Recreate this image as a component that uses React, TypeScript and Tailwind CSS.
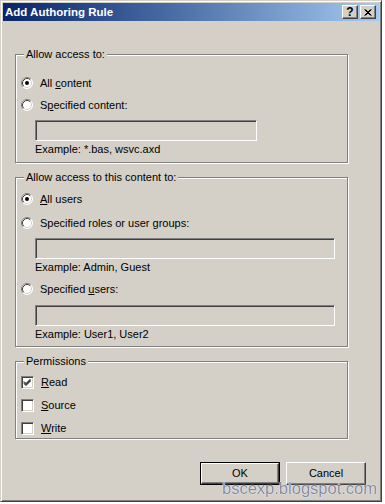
import type { ReactNode } from 'react';

const Radio = ({ checked }: { checked?: boolean }) => (
  <svg width="12" height="12" viewBox="0 0 12 12" className="shrink-0">
    <circle cx="6" cy="6" r="5.5" fill="#fff" />
    <path d="M2.11 9.89A5.5 5.5 0 0 1 9.89 2.11" fill="none" stroke="#808080" />
    <path d="M9.89 2.11A5.5 5.5 0 0 1 2.11 9.89" fill="none" stroke="#fff" />
    <path d="M2.82 9.18A4.5 4.5 0 0 1 9.18 2.82" fill="none" stroke="#404040" />
    <path d="M9.18 2.82A4.5 4.5 0 0 1 2.82 9.18" fill="none" stroke="#d4d0c8" />
    {checked && <circle cx="6" cy="6" r="2" fill="#000" />}
  </svg>
);

const Check = ({ checked }: { checked?: boolean }) => (
  <div className="w-[13px] h-[13px] shrink-0 bg-white border border-t-[#808080] border-l-[#808080] border-r-white border-b-white shadow-[inset_1px_1px_0_#404040,inset_-1px_-1px_0_#d4d0c8] flex items-center justify-center">
    {checked && (
      <svg width="9" height="9" viewBox="0 0 9 9">
        <path d="M1 3.5l2 2 4.5-4.5M1 4.5l2 2 4.5-4.5M1 5.5l2 2 4.5-4.5" fill="none" stroke="#000" strokeWidth="1" />
      </svg>
    )}
  </div>
);

const Field = ({ width }: { width: string }) => (
  <div
    className={`ml-[14px] h-[21px] bg-[#d4d0c8] border border-t-[#808080] border-l-[#808080] border-r-white border-b-white shadow-[inset_1px_1px_0_#404040] ${width}`}
  />
);

const Row = ({ children, top, control }: { children: ReactNode; top: string; control: ReactNode }) => (
  <div className={`flex items-center h-4 gap-[7px] ${top}`}>
    {control}
    <span className="leading-[13px]">{children}</span>
  </div>
);

const Group = ({ label, height, top, children }: { label: string; height: string; top: string; children: ReactNode }) => (
  <fieldset
    className={`w-[333px] border border-[#808080] shadow-[1px_1px_0_#fff,inset_1px_1px_0_#fff] ${height} ${top}`}
  >
    <legend className="ml-[8px] px-[2px] leading-[13px] bg-[#d4d0c8]">{label}</legend>
    <div className="flex flex-col pl-[5px]">{children}</div>
  </fieldset>
);

const Example = ({ text }: { text: string }) => (
  <div className="ml-[14px] mt-[2px] leading-[13px]">{text}</div>
);

const CaptionButton = ({ children }: { children: ReactNode }) => (
  <div className="w-[16px] h-[14px] bg-[#d4d0c8] border border-t-white border-l-white border-r-[#404040] border-b-[#404040] shadow-[inset_-1px_-1px_0_#808080] flex items-center justify-center">
    {children}
  </div>
);

export default function App() {
  return (
    <div className="relative w-[385px] h-[504px] bg-white font-['Liberation_Sans',Arial,sans-serif] text-[11px] text-black">
      <div className="w-[382px] h-[502px] flex flex-col bg-[#d4d0c8] p-[2px] border border-t-[#d4d0c8] border-l-[#d4d0c8] border-r-[#404040] border-b-[#404040] shadow-[inset_1px_1px_0_#fff,inset_-1px_-1px_0_#808080]">
        {/* title bar */}
        <div className="h-[18px] flex items-center justify-between bg-gradient-to-r from-[#0a246a] to-[#a6caf0] pl-[2px] pr-[3px]">
          <span className="text-white font-bold text-[11.5px] leading-[14px]">Add Authoring Rule</span>
          <div className="flex gap-[2px]">
            <CaptionButton>
              <span className="font-bold text-[12px] leading-[12px]">?</span>
            </CaptionButton>
            <CaptionButton>
              <svg width="8" height="7" viewBox="0 0 8 7">
                <path d="M0.5 0.5l6 6M1.5 0.5l6 6M6.5 0.5l-6 6M7.5 0.5l-6 6" stroke="#000" strokeWidth="1" />
              </svg>
            </CaptionButton>
          </div>
        </div>

        <div className="flex flex-col pl-[12px]">
          <Group label="Allow access to:" height="h-[115px]" top="mt-[27px]">
            <Row top="mt-[14px]" control={<Radio checked />}>
              All <span className="underline">c</span>ontent
            </Row>
            <Row top="mt-[6px]" control={<Radio />}>
              S<span className="underline">p</span>ecified content:
            </Row>
            <div className="mt-[7px]">
              <Field width="w-[222px]" />
            </div>
            <Example text="Example: *.bas, wsvc.axd" />
          </Group>

          <Group label="Allow access to this content to:" height="h-[176px]" top="mt-[8px]">
            <Row top="mt-[7px]" control={<Radio checked />}>
              <span className="underline">A</span>ll users
            </Row>
            <Row top="mt-[8px]" control={<Radio />}>
              Specified roles or user <span className="underline">g</span>roups:
            </Row>
            <div className="mt-[7px]">
              <Field width="w-[300px]" />
            </div>
            <Example text="Example: Admin, Guest" />
            <Row top="mt-[7px]" control={<Radio />}>
              Specified <span className="underline">u</span>sers:
            </Row>
            <div className="mt-[8px]">
              <Field width="w-[300px]" />
            </div>
            <Example text="Example: User1, User2" />
          </Group>

          <Group label="Permissions" height="h-[84px]" top="mt-[8px]">
            <Row top="mt-[6px]" control={<Check checked />}>
              <span className="underline">R</span>ead
            </Row>
            <Row top="mt-[7px]" control={<Check />}>
              <span className="underline">S</span>ource
            </Row>
            <Row top="mt-[7px]" control={<Check />}>
              <span className="underline">W</span>rite
            </Row>
          </Group>

          <div className="mt-[23px] flex justify-end gap-[6px] pr-[13px]">
            <button className="w-[80px] h-[23px] border border-black bg-[#d4d0c8] p-0">
              <div className="w-full h-full flex items-center justify-center border border-t-white border-l-white border-r-[#404040] border-b-[#404040] shadow-[inset_-1px_-1px_0_#808080]">
                OK
              </div>
            </button>
            <button className="w-[80px] h-[23px] bg-[#d4d0c8] flex items-center justify-center border border-t-white border-l-white border-r-[#404040] border-b-[#404040] shadow-[inset_-1px_-1px_0_#808080]">
              Cancel
            </button>
          </div>
        </div>
      </div>

      <div className="absolute left-[222px] top-[479px] text-[16.5px] leading-[18px] text-[#858aa0] [text-shadow:0_0_1px_#fff,0_0_1px_#fff] pointer-events-none">
        bscexp.blogspot.com
      </div>
    </div>
  );
}
